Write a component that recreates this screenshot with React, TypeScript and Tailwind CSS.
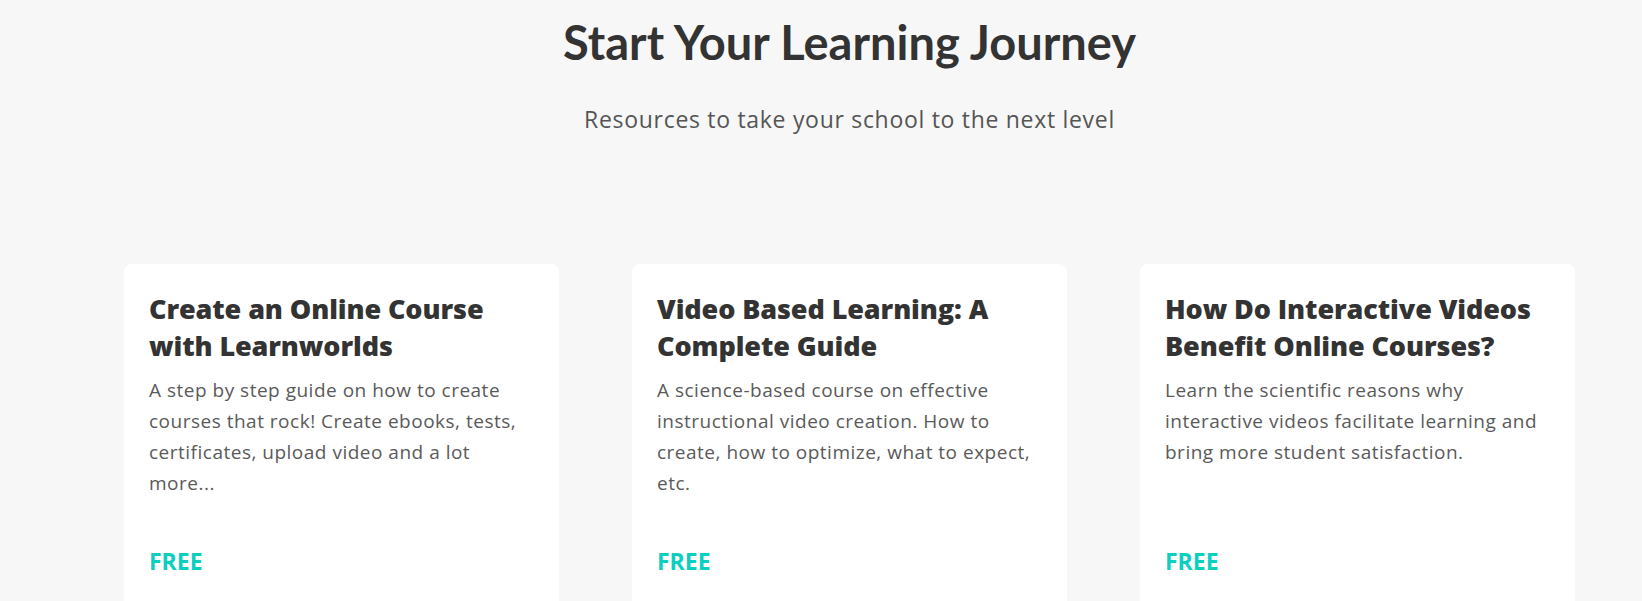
const courses = [
  {
    title: "Create an Online Course with Learnworlds",
    body: "A step by step guide on how to create courses that rock! Create ebooks, tests, certificates, upload video and a lot more...",
  },
  {
    title: "Video Based Learning: A Complete Guide",
    body: "A science-based course on effective instructional video creation. How to create, how to optimize, what to expect, etc.",
  },
  {
    title: "How Do Interactive Videos Benefit Online Courses?",
    body: "Learn the scientific reasons why interactive videos facilitate learning and bring more student satisfaction.",
  },
];

const sans = "'Open Sans', Lato, sans-serif";

function CourseCard(props: { title: string; body: string }) {
  return (
    <div className="bg-white rounded-lg px-[25px] pt-[26px] pb-[40px] flex flex-col">
      <h3 className="text-[27px] leading-[37px] font-extrabold text-[#333333] tracking-[-0.1px]">
        {props.title}
      </h3>
      <p className="mt-[11px] min-h-[124px] text-[19px] leading-[31px] tracking-[0.5px] text-[#5a5a5a]">
        {props.body}
      </p>
      <span className="mt-[49px] text-[23px] leading-[26px] font-bold text-[#0ccfbf]">
        FREE
      </span>
    </div>
  );
}

export default function App() {
  return (
    <div
      className="min-h-screen bg-[#f7f7f7] overflow-hidden"
      style={{ fontFamily: sans }}
    >
      <div className="w-[1451px] ml-[124px] pt-[14px]">
        <h1
          className="text-center text-[47px] leading-[1.2] font-bold text-[#333333]"
          style={{ fontFamily: "Lato, sans-serif" }}
        >
          Start Your Learning Journey
        </h1>
        <p className="mt-[33px] text-center text-[23px] leading-[33px] tracking-[0.7px] text-[#555555]">
          Resources to take your school to the next level
        </p>

        <div className="mt-[128px] grid grid-cols-3 gap-[73px]">
          {courses.map((c) => (
            <CourseCard key={c.title} title={c.title} body={c.body} />
          ))}
        </div>
      </div>
    </div>
  );
}
